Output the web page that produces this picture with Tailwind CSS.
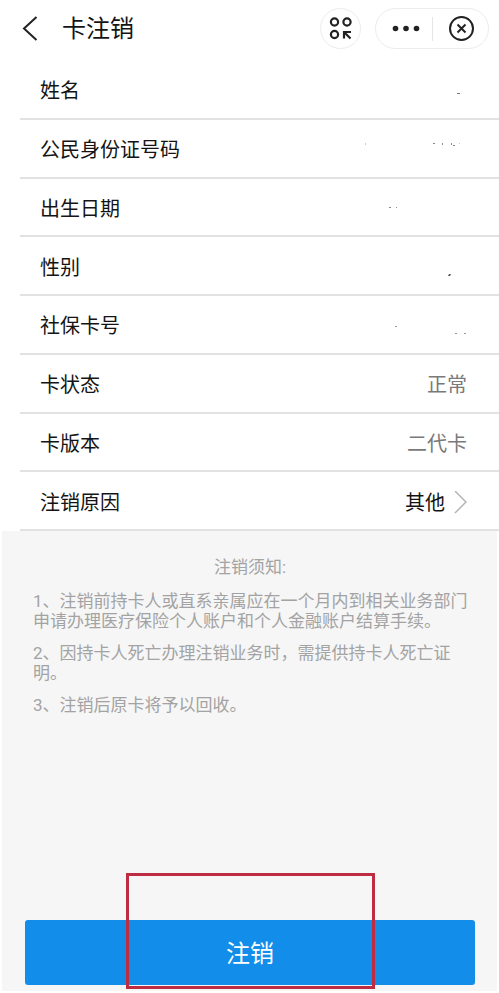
<!DOCTYPE html>
<html lang="zh-CN">
<head>
  <meta charset="UTF-8" />
  <meta name="viewport" content="width=device-width, initial-scale=1.0" />
  <title>卡注销</title>
  <script src="https://cdn.jsdelivr.net/npm/@tailwindcss/browser@4"></script>
</head>
<body class="bg-white text-[#141414] font-['Roboto','Noto_Sans_CJK_SC',sans-serif]">
  <div class="min-h-screen flex flex-col">
    <!-- Title bar -->
    <header class="flex items-center pt-2 pb-3 pl-5 pr-[10px]">
      <a href="#" aria-label="返回" class="w-[42px]">
        <svg class="w-5 h-7" viewBox="0 0 20 28" fill="none" stroke="#222" stroke-width="2"><path d="M16.500 2 4 13.500l12.500 11.500" /></svg>
      </a>
      <h1 class="flex-1 text-2xl">卡注销</h1>
      <button type="button" aria-label="小程序" class="w-[41px] h-[41px] rounded-full border border-[#ececec] flex items-center justify-center mr-[14px]">
        <svg class="w-6 h-6" viewBox="0 0 24 24" fill="none" stroke="#222" stroke-width="2.200">
          <circle cx="5.500" cy="5" r="3.600" />
          <circle cx="18" cy="5" r="3.600" />
          <circle cx="5.500" cy="17.500" r="3.600" />
          <path d="M15 21.500v-6.500h7M15.500 15.500l6 6" />
        </svg>
      </button>
      <div class="w-[114px] h-[41px] rounded-full border border-[#ececec] flex items-center">
        <button type="button" aria-label="更多" class="flex-1 flex justify-center pl-1">
          <svg class="w-7 h-6" viewBox="0 0 28 24" fill="#222"><circle cx="3.500" cy="11.500" r="2.800" /><circle cx="14" cy="11.500" r="2.800" /><circle cx="24.500" cy="11.500" r="2.800" /></svg>
        </button>
        <span class="w-px h-6 bg-[#e6e6e6]"></span>
        <button type="button" aria-label="关闭" class="flex-1 flex justify-center pl-1">
          <svg class="w-[26px] h-[26px]" viewBox="0 0 26 26" fill="none" stroke="#222" stroke-width="2"><circle cx="12.500" cy="12.500" r="11.500" /><path d="m8.500 8.500 8 8M16.500 8.500l-8 8" /></svg>
        </button>
      </div>
    </header>

    <!-- Card details -->
    <dl class="grid grid-rows-8 h-[470px] ml-5 text-xl">
      <div class="flex items-center justify-between pt-1 pl-5 pr-8 border-b-2 border-[#e2e2e2]">
        <dt>姓名</dt>
        <dd><svg class="w-[120px] h-10" viewBox="0 0 120 40" fill="#777"><rect x="110" y="22" width="3" height="1" /></svg></dd>
      </div>
      <div class="flex items-center justify-between pt-1 pl-5 pr-8 border-b-2 border-[#e2e2e2]">
        <dt>公民身份证号码</dt>
        <dd>
          <svg class="w-[120px] h-10" viewBox="0 0 120 40" fill="#888">
            <rect x="18" y="13" width="1" height="2" fill="#ccc" />
            <rect x="86" y="13" width="2" height="1" />
            <rect x="95" y="13" width="1" height="2" />
            <rect x="104" y="13" width="1" height="2" />
            <rect x="106" y="15" width="2" height="1" />
            <rect x="112" y="13" width="1" height="1" fill="#ccc" />
          </svg>
        </dd>
      </div>
      <div class="flex items-center justify-between pt-1 pl-5 pr-8 border-b-2 border-[#e2e2e2]">
        <dt>出生日期</dt>
        <dd><svg class="w-[120px] h-10" viewBox="0 0 120 40" fill="#888"><rect x="42" y="18" width="2" height="1" /><rect x="49" y="18" width="1" height="1" /></svg></dd>
      </div>
      <div class="flex items-center justify-between pt-1 pl-5 pr-8 border-b-2 border-[#e2e2e2]">
        <dt>性别</dt>
        <dd><svg class="w-[120px] h-10" viewBox="0 0 120 40" fill="#555"><path d="m101 28 1-2h2l-1 2z" /></svg></dd>
      </div>
      <div class="flex items-center justify-between pt-1 pl-5 pr-8 border-b-2 border-[#e2e2e2]">
        <dt>社保卡号</dt>
        <dd>
          <svg class="w-[120px] h-10" viewBox="0 0 120 40" fill="#999">
            <rect x="48" y="20" width="2" height="1" />
            <rect x="108" y="27" width="2" height="1" />
            <rect x="117" y="27" width="2" height="1" />
          </svg>
        </dd>
      </div>
      <div class="flex items-center justify-between pt-1 pl-5 pr-8 border-b-2 border-[#e2e2e2]">
        <dt>卡状态</dt>
        <dd class="text-[#7a7a7a]">正常</dd>
      </div>
      <div class="flex items-center justify-between pt-1 pl-5 pr-8 border-b-2 border-[#e2e2e2]">
        <dt>卡版本</dt>
        <dd class="text-[#7a7a7a]">二代卡</dd>
      </div>
      <div class="flex items-center justify-between pt-1 pl-5 pr-8 border-b-2 border-[#e2e2e2]">
        <dt>注销原因</dt>
        <dd>
          <button type="button" class="flex items-center gap-2">其他
            <svg class="w-[14px] h-6" viewBox="0 0 14 24" fill="none" stroke="#b5b5b5" stroke-width="1.500"><path d="M2 0l11 11L2 22" /></svg>
          </button>
        </dd>
      </div>
    </dl>

    <!-- Notice -->
    <main class="flex-1 flex flex-col justify-between mx-[2px] mb-[2px] bg-[#f6f6f6]">
      <section class="pt-[26px] pl-[31px] pr-[22px] text-[17px] leading-5 text-[#a3a3a3]">
        <h2 class="text-center pr-2 mb-[14px]">注销须知:</h2>
        <p class="mb-3">1、注销前持卡人或直系亲属应在一个月内到相关业务部门申请办理医疗保险个人账户和个人金融账户结算手续。</p>
        <p class="mb-3">2、因持卡人死亡办理注销业务时，需提供持卡人死亡证明。</p>
        <p>3、注销后原卡将予以回收。</p>
      </section>

      <div class="relative ml-[23px] mr-[22px] mb-[6px]">
        <button type="button" class="block w-full h-[65px] pt-[2px] rounded-[3px] bg-[#128de9] text-white text-2xl">注销</button>
        <!-- Highlight frame around the button -->
        <div class="absolute -top-[47px] -bottom-1 left-[101px] right-[100px] border-3 border-[#bd2c40] pointer-events-none"></div>
      </div>
    </main>
  </div>
</body>
</html>
